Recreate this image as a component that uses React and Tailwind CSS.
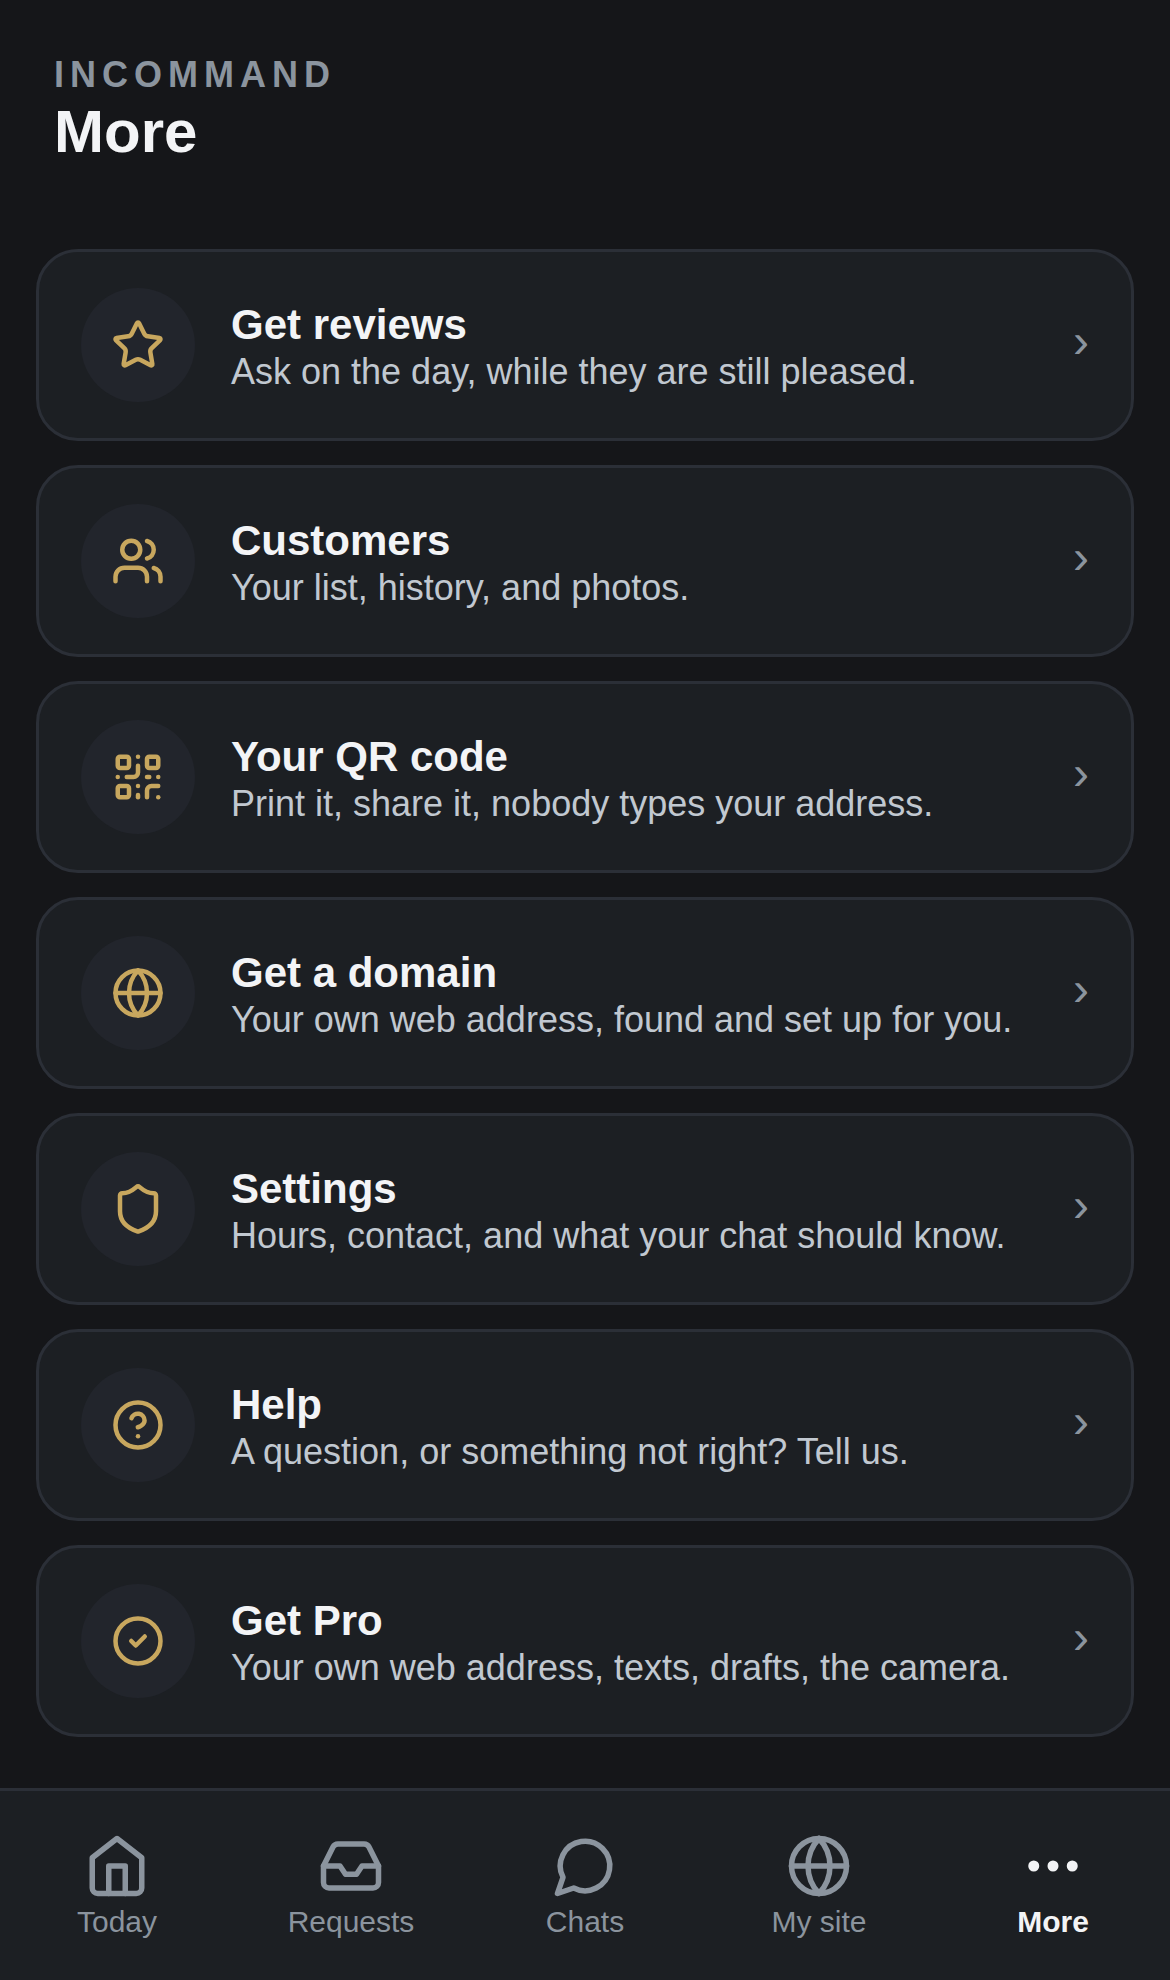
import React from 'react';
import { CircleCheck, CircleQuestionMark, Ellipsis, Globe, Inbox, QrCode, Shield, Star, Users } from 'lucide-react';

const strokeProps = {
  viewBox: '0 0 24 24',
  fill: 'none',
  stroke: 'currentColor',
  strokeWidth: 2,
  strokeLinecap: 'round',
  strokeLinejoin: 'round',
};

const HomeIcon = ({ className }) => (
  <svg {...strokeProps} className={className} aria-hidden="true">
    <path d="M3 9l9-7 9 7v11a2 2 0 0 1-2 2H5a2 2 0 0 1-2-2z" />
    <path d="M9 22V12h6v10" />
  </svg>
);

const ChatIcon = ({ className }) => (
  <svg {...strokeProps} className={className} aria-hidden="true">
    <path d="M7.9 20A9 9 0 1 0 4 16.1L2 22Z" />
  </svg>
);

const links = [
  { href: '#reviews', icon: Star, title: 'Get reviews', text: 'Ask on the day, while they are still pleased.' },
  { href: '#customers', icon: Users, title: 'Customers', text: 'Your list, history, and photos.' },
  { href: '#qr', icon: QrCode, title: 'Your QR code', text: 'Print it, share it, nobody types your address.' },
  { href: '#domain', icon: Globe, title: 'Get a domain', text: 'Your own web address, found and set up for you.' },
  { href: '#settings', icon: Shield, title: 'Settings', text: 'Hours, contact, and what your chat should know.' },
  { href: '#help', icon: CircleQuestionMark, title: 'Help', text: 'A question, or something not right? Tell us.' },
  { href: '#pro', icon: CircleCheck, title: 'Get Pro', text: 'Your own web address, texts, drafts, the camera.' },
];

const tabs = [
  { href: '#today', icon: HomeIcon, label: 'Today' },
  { href: '#requests', icon: Inbox, label: 'Requests' },
  { href: '#chats', icon: ChatIcon, label: 'Chats' },
  { href: '#site', icon: Globe, label: 'My site' },
  { href: '#more', icon: Ellipsis, label: 'More', active: true },
];

const LinkCard = ({ href, icon: Icon, title, text }) => (
  <a
    href={href}
    className="flex items-center gap-9 rounded-[42px] border-3 border-[#2b2f37] bg-[#1c1f23] px-[42px] py-9"
  >
    <span className="flex size-[114px] shrink-0 items-center justify-center rounded-full bg-[#22252c] text-[#c8a75e]">
      <Icon className="size-[54px]" />
    </span>
    <span className="min-w-0 flex-1">
      <span className="block text-[42px] leading-[54px] font-bold text-[#f3f4f6]">{title}</span>
      <span className="block text-[36px] leading-[40px] text-[#c1c8d0]">{text}</span>
    </span>
    <span className="pb-2 text-[48px] leading-[54px] text-[#8b949e]" aria-hidden="true">›</span>
  </a>
);

// Bottom tab bar, the current tab is white and bold
const TabBar = () => (
  <nav className="sticky bottom-0 grid h-48 grid-cols-5 border-t-3 border-[#2b2f37] bg-[#1c1f23] pt-[42px]">
    {tabs.map(({ href, icon: Icon, label, active }) => (
      <a
        key={href}
        href={href}
        aria-current={active ? 'page' : undefined}
        className={
          active
            ? 'flex flex-col items-center gap-1.5 font-bold text-[#f3f4f6]'
            : 'flex flex-col items-center gap-1.5 text-[#8b949e]'
        }
      >
        <Icon className="size-[66px]" />
        <span className="text-[30px] leading-[34px]">{label}</span>
      </a>
    ))}
  </nav>
);

const App = () => {
  return (
    <div className="flex min-h-screen flex-col bg-[#151619] font-['Liberation_Sans',Arial,sans-serif]">
      <main className="flex-1 px-9 pt-[54px] pb-12">
        <header className="mb-[81px] px-[18px]">
          <p className="text-[36px] leading-[42px] font-bold tracking-[6px] text-[#8b949e] uppercase">InCommand</p>
          <h1 className="text-[60px] leading-[72px] font-bold text-[#f3f4f6]">More</h1>
        </header>
        <div className="flex flex-col gap-6">
          {links.map((link) => (
            <LinkCard key={link.href} {...link} />
          ))}
        </div>
      </main>
      <TabBar />
    </div>
  );
};

export default App;
